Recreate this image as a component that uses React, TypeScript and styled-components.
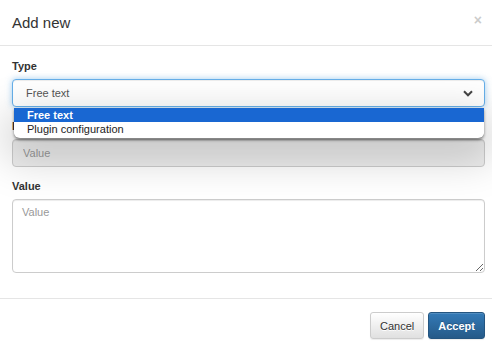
import styled, { createGlobalStyle } from "styled-components";

const GlobalStyle = createGlobalStyle`
    html, body {
        margin: 0;
        padding: 0;
        background: #fff;
        font-family: "Liberation Sans", Arial, sans-serif;
        font-size: 11px;
        color: #333;
    }
`;

const Modal = styled.div`
    width: 492px;
    height: 346px;
    overflow: hidden;
    background: #fff;
`;

const Header = styled.header`
    display: flex;
    align-items: center;
    justify-content: space-between;
    padding: 12px 7px 11px 12px;
    border-bottom: 1px solid #e5e5e5;
`;

const Title = styled.h4`
    margin: 0;
    font-size: 15px;
    font-weight: normal;
    line-height: 22px;
    color: #333;
`;

const CloseButton = styled.button`
    border: none;
    background: none;
    padding: 0;
    margin: -6px 3px 0 0;
    font-family: "Liberation Sans", Arial, sans-serif;
    font-size: 14px;
    font-weight: bold;
    line-height: 1;
    color: #000;
    opacity: 0.2;
    cursor: pointer;
`;

const Body = styled.section`
    padding: 12px 7px 25px 12px;
`;

const FormGroup = styled.div`
    display: flex;
    flex-direction: column;
    & + & {
        margin-top: 11px;
    }
`;

const Label = styled.label`
    font-weight: bold;
    line-height: 17px;
    margin-bottom: 4px;
    color: #333;
`;

const SelectWrap = styled.div`
    position: relative;
    z-index: 2;
`;

const SelectBox = styled.div`
    display: flex;
    align-items: center;
    justify-content: space-between;
    height: 28px;
    box-sizing: border-box;
    padding: 0 11px 0 13px;
    border: 1px solid #66afe9;
    border-radius: 4px;
    background: #fff;
    color: #555;
    box-shadow: inset 0 1px 1px rgba(0, 0, 0, 0.075), 0 0 6px rgba(102, 175, 233, 0.6);
`;

const DropdownList = styled.ul`
    position: absolute;
    top: 29px;
    left: 2px;
    right: 1px;
    margin: 0;
    padding: 0 0 1px;
    list-style: none;
    background: #fff;
    border-radius: 0 0 6px 6px;
    overflow: hidden;
    box-shadow: 0 2px 3px rgba(0, 0, 0, 0.45), 0 14px 40px 10px rgba(0, 0, 0, 0.17);
`;

const Option = styled.li<{ $selected?: boolean }>`
    height: 14px;
    line-height: 14px;
    padding-left: 13px;
    font-size: 11px;
    color: ${(p) => (p.$selected ? "#fff" : "#222")};
    background: ${(p) => (p.$selected ? "#1967d2" : "#fff")};
    font-weight: ${(p) => (p.$selected ? "bold" : "normal")};
    & + & {
        height: 15px;
        line-height: 15px;
    }
`;

const Input = styled.input`
    height: 28px;
    box-sizing: border-box;
    padding: 0 10px;
    border: 1px solid #ccc;
    border-radius: 4px;
    font-family: "Liberation Sans", Arial, sans-serif;
    font-size: 11px;
    color: #555;
    box-shadow: inset 0 1px 1px rgba(0, 0, 0, 0.075);
    &:disabled {
        background: #eee;
    }
    &::placeholder {
        color: #999;
    }
`;

const TextArea = styled.textarea`
    height: 74px;
    box-sizing: border-box;
    padding: 6px 9px;
    border: 1px solid #ccc;
    border-radius: 4px;
    font-family: "Liberation Sans", Arial, sans-serif;
    font-size: 11px;
    color: #555;
    background: transparent;
    box-shadow: inset 0 1px 1px rgba(0, 0, 0, 0.075);
    resize: vertical;
    &::placeholder {
        color: #999;
    }
`;

const Footer = styled.footer`
    display: flex;
    justify-content: flex-end;
    gap: 4px;
    padding: 13px 7px 13px 12px;
    border-top: 1px solid #e5e5e5;
`;

const Button = styled.button<{ $primary?: boolean }>`
    height: 27px;
    padding: 0 9px;
    border-radius: 3px;
    font-family: "Liberation Sans", Arial, sans-serif;
    font-size: 11px;
    cursor: pointer;
    border: 1px solid ${(p) => (p.$primary ? "#245580" : "#ccc")};
    color: ${(p) => (p.$primary ? "#fff" : "#333")};
    font-weight: ${(p) => (p.$primary ? "bold" : "normal")};
    text-shadow: ${(p) => (p.$primary ? "0 -1px 0 rgba(0,0,0,.2)" : "0 1px 0 #fff")};
    background: ${(p) =>
        p.$primary
            ? "linear-gradient(to bottom, #337ab7 0, #265a88 100%)"
            : "linear-gradient(to bottom, #fff 0, #e0e0e0 100%)"};
    box-shadow: inset 0 1px 0 rgba(255, 255, 255, 0.15), 0 1px 1px rgba(0, 0, 0, 0.075);
`;

const Chevron = () => (
    <svg width="10" height="7" viewBox="0 0 10 7">
        <path d="M1 1.3 L5 5.3 L9 1.3" fill="none" stroke="#444" strokeWidth="2" />
    </svg>
);

const App = () => {
    return (
        <>
            <GlobalStyle />
            <Modal>
                <Header>
                    <Title>Add new</Title>
                    <CloseButton>×</CloseButton>
                </Header>
                <Body>
                    <FormGroup>
                        <Label>Type</Label>
                        <SelectWrap>
                            <SelectBox>
                                <span>Free text</span>
                                <Chevron />
                            </SelectBox>
                            <DropdownList>
                                <Option $selected>Free text</Option>
                                <Option>Plugin configuration</Option>
                            </DropdownList>
                        </SelectWrap>
                    </FormGroup>
                    <FormGroup>
                        <Label>Key</Label>
                        <Input placeholder="Value" disabled />
                    </FormGroup>
                    <FormGroup>
                        <Label>Value</Label>
                        <TextArea placeholder="Value" />
                    </FormGroup>
                </Body>
                <Footer>
                    <Button>Cancel</Button>
                    <Button $primary>Accept</Button>
                </Footer>
            </Modal>
        </>
    );
};

export default App;
